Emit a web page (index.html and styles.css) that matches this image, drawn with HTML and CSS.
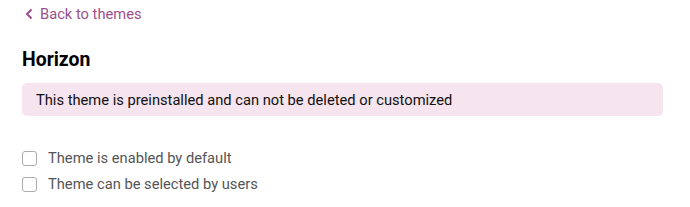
FILE: index.html
```html
<!DOCTYPE html>
<html>
<head>
<meta charset="utf-8">
<link rel="stylesheet" href="styles.css">
</head>
<body>
<div class="page">
  <a class="back" href="#">
    <svg class="chev" width="10" height="12" viewBox="0 0 10 12"><path d="M7.5 1.5 L3 6 L7.5 10.5" fill="none" stroke="currentColor" stroke-width="2"/></svg>
    <span>Back to themes</span>
  </a>
  <h1 class="title">Horizon</h1>
  <div class="notice">This theme is preinstalled and can not be deleted or customized</div>
  <div class="options">
    <label class="opt"><span class="box"></span><span>Theme is enabled by default</span></label>
    <label class="opt"><span class="box"></span><span>Theme can be selected by users</span></label>
  </div>
</div>
</body>
</html>
```
FILE: styles.css
```css
html, body { margin: 0; padding: 0; background: #fff; }
body { font-family: Roboto, "Noto Sans", sans-serif; }
.page { padding: 0 27px 0 22px; }
.back {
  display: flex; align-items: center; gap: 6px;
  color: #9b4f8c; text-decoration: none; font-size: 14.7px;
  height: 28px; padding-left: 2px;
}
.chev { display: block; }
.title {
  margin: 20px 0 0; font-size: 19.4px; font-weight: 700; color: #000;
  line-height: 24px;
}
.notice {
  margin-top: 11px; background: #f6e4ef; border-radius: 5px;
  padding: 0 14px; height: 33px; line-height: 35px;
  font-size: 14.7px; color: #111;
}
.options { margin-top: 35px; display: flex; flex-direction: column; gap: 11px; }
.opt { display: flex; align-items: center; gap: 11px; font-size: 14.7px; color: #555; line-height: 15px; }
.box {
  width: 13px; height: 13px; border: 1px solid #aaa; border-radius: 3px; background: #fff;
  flex: none;
}
```
